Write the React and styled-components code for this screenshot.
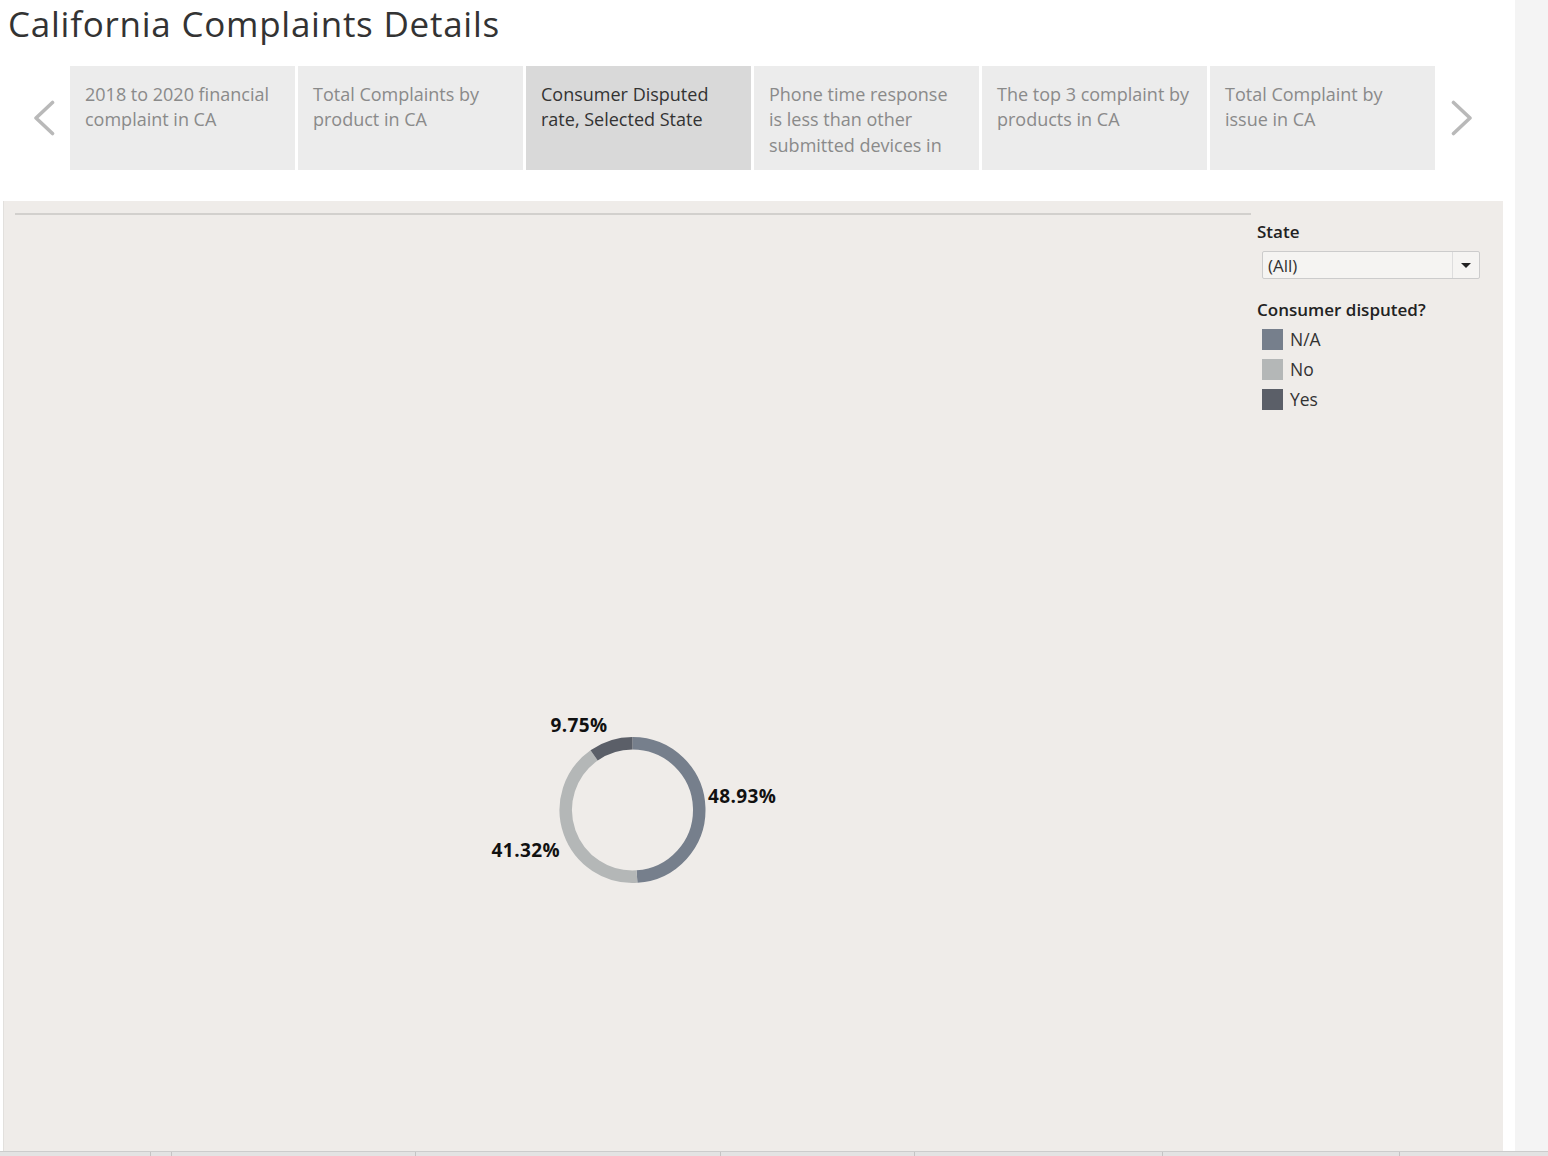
import React from 'react'
import styled, { createGlobalStyle } from 'styled-components'

const GlobalStyle = createGlobalStyle`
  html, body {
    margin: 0;
    padding: 0;
    background: #ffffff;
    font-family: 'Open Sans', 'Noto Sans', sans-serif;
    color: #333333;
  }
`

// tab captions are cut to the lines that fit in the tab
const tabs = [
  { lines: ['2018 to 2020 financial', 'complaint in CA'] },
  { lines: ['Total Complaints by', 'product in CA'] },
  { lines: ['Consumer Disputed', 'rate, Selected State'], active: true },
  { lines: ['Phone time response', 'is less than other', 'submitted devices in'] },
  { lines: ['The top 3 complaint by', 'products in CA'] },
  { lines: ['Total Complaint by', 'issue in CA'] }
]

const slices = [
  { label: 'N/A', value: 48.93, color: '#767f8c' },
  { label: 'No', value: 41.32, color: '#b4b7b7' },
  { label: 'Yes', value: 9.75, color: '#5b5f68' }
]

const footerCells = [150, 20, 243, 304, 193, 247, 236]

const Page = styled.div`
  display: flex;
  flex-direction: column;
  height: 100vh;
  overflow: hidden;
`

const Screen = styled.div`
  display: flex;
  height: 1151px;
`

const Main = styled.div`
  width: 1515px;
  display: flex;
  flex-direction: column;
`

const ScrollTrack = styled.div`
  flex: 1;
  background: #f4f4f4;
`

const Title = styled.h1`
  margin: 0;
  padding: 4px 0 0 8px;
  height: 66px;
  box-sizing: border-box;
  font-size: 35px;
  font-weight: 400;
  line-height: 40px;
  color: #333333;
  letter-spacing: 0.75px;
  white-space: nowrap;
`

const TabStrip = styled.div`
  display: flex;
  height: 104px;
`

const NavButton = styled.div`
  width: ${p => (p.$side === 'left' ? '70px' : '80px')};
  display: flex;
  align-items: center;
  justify-content: ${p => (p.$side === 'left' ? 'flex-end' : 'flex-start')};
  padding: ${p => (p.$side === 'left' ? '0 15px 0 0' : '0 0 0 16px')};
  box-sizing: border-box;
  cursor: pointer;

  svg {
    width: 22px;
    height: 36px;
  }
`

const Tabs = styled.div`
  display: flex;
  gap: 3px;
`

const Tab = styled.div`
  width: 225px;
  height: 104px;
  box-sizing: border-box;
  padding: 15.5px 15px 0;
  background: ${p => (p.$active ? '#d9d9d9' : '#ececec')};
  color: ${p => (p.$active ? '#333333' : '#8a8a8a')};
  font-size: 18px;
  line-height: 25.5px;
  cursor: pointer;
  overflow: hidden;

  > span {
    display: block;
    white-space: nowrap;
  }
`

const Panel = styled.div`
  margin: 31px 0 0 3px;
  width: 1500px;
  flex: 1;
  display: flex;
  background: #efece9;
  border-left: 1px solid #e2e0dd;
  box-sizing: border-box;
`

const ChartArea = styled.div`
  width: 1247px;
  padding: 12px 0 0 11px;
  box-sizing: border-box;
  display: flex;
  flex-direction: column;
`

const Rule = styled.div`
  height: 2px;
  background: #d2d0cd;
`

const Plot = styled.svg`
  flex: 1;
  width: 100%;
  display: block;

  text {
    font-family: 'Open Sans', 'Noto Sans', sans-serif;
    font-weight: 700;
    font-size: 19px;
    letter-spacing: 0.4px;
    fill: #111111;
  }
`

const Sidebar = styled.div`
  flex: 1;
  padding: 20px 0 0 6px;
  display: flex;
  flex-direction: column;
`

const FieldLabel = styled.div`
  font-size: 17px;
  font-weight: 600;
  line-height: 21px;
  color: #222222;
`

const Select = styled.div`
  margin: 9px 0 0 5px;
  width: 218px;
  height: 28px;
  box-sizing: border-box;
  display: flex;
  background: #f5f4f2;
  border: 1px solid #cccccc;
  border-radius: 2px;
  font-size: 17px;
  color: #333333;
`

const SelectValue = styled.div`
  flex: 1;
  padding-left: 5px;
  display: flex;
  align-items: center;
`

const SelectCaret = styled.div`
  width: 26px;
  border-left: 1px solid #dddddd;
  display: flex;
  align-items: center;
  justify-content: center;

  &::after {
    content: '';
    border-left: 5px solid transparent;
    border-right: 5px solid transparent;
    border-top: 5px solid #222222;
  }
`

const LegendTitle = styled(FieldLabel)`
  margin-top: 20px;
  margin-bottom: 4px;
`

const LegendRow = styled.div`
  height: 30px;
  display: flex;
  align-items: center;
  gap: 7px;
  padding-left: 5px;
  font-size: 17.5px;
  color: #333333;
`

const Swatch = styled.span`
  width: 21px;
  height: 21px;
  background: ${p => p.$color};
`

const Footer = styled.div`
  flex: 1;
  display: flex;
  background: #e3e3e3;
  border-top: 1px solid #cccccc;
`

const FooterCell = styled.div`
  width: ${p => p.$w}px;
  border-right: 1px solid #c4c4c4;
`

const Chevron = ({ dir }) => (
  <svg viewBox='0 0 22 36'>
    <polyline
      points={dir === 'left' ? '19.5,2.5 3,18 19.5,33.5' : '2.5,2.5 19,18 2.5,33.5'}
      fill='none'
      stroke='#b9b9b9'
      strokeWidth='3.6'
      strokeLinecap='round'
      strokeLinejoin='round'
    />
  </svg>
)

const point = (cx, cy, r, a) => [cx + r * Math.sin(a), cy - r * Math.cos(a)]

const arcPath = (cx, cy, r, start, end) => {
  const [x0, y0] = point(cx, cy, r, start)
  const [x1, y1] = point(cx, cy, r, end)
  const large = end - start > Math.PI ? 1 : 0
  return `M ${x0} ${y0} A ${r} ${r} 0 ${large} 1 ${x1} ${y1}`
}

const Donut = () => {
  const cx = 617.5
  const cy = 595
  const r = 66.75
  let acc = 0
  return (
    <g>
      {slices.map(s => {
        const start = (acc / 100) * Math.PI * 2
        acc += s.value
        const end = (acc / 100) * Math.PI * 2
        return <path key={s.label} d={arcPath(cx, cy, r, start, end)} fill='none' stroke={s.color} strokeWidth='12.5' />
      })}
      <text x='564' y='517' textAnchor='middle'>9.75%</text>
      <text x='693' y='588'>48.93%</text>
      <text x='545' y='642' textAnchor='end'>41.32%</text>
    </g>
  )
}

export default function App() {
  return (
    <Page>
      <GlobalStyle />
      <Screen>
        <Main>
          <Title>California Complaints Details</Title>
          <TabStrip>
            <NavButton $side='left'>
              <Chevron dir='left' />
            </NavButton>
            <Tabs>
              {tabs.map((tab, idx) => (
                <Tab key={idx} $active={tab.active}>
                  {tab.lines.map(line => (
                    <span key={line}>{line}</span>
                  ))}
                </Tab>
              ))}
            </Tabs>
            <NavButton $side='right'>
              <Chevron dir='right' />
            </NavButton>
          </TabStrip>
          <Panel>
            <ChartArea>
              <Rule />
              <Plot>
                <Donut />
              </Plot>
            </ChartArea>
            <Sidebar>
              <FieldLabel>State</FieldLabel>
              <Select>
                <SelectValue>(All)</SelectValue>
                <SelectCaret />
              </Select>
              <LegendTitle>Consumer disputed?</LegendTitle>
              {slices.map(s => (
                <LegendRow key={s.label}>
                  <Swatch $color={s.color} />
                  {s.label}
                </LegendRow>
              ))}
            </Sidebar>
          </Panel>
        </Main>
        <ScrollTrack />
      </Screen>
      <Footer>
        {footerCells.map((w, idx) => (
          <FooterCell key={idx} $w={w} />
        ))}
      </Footer>
    </Page>
  )
}
